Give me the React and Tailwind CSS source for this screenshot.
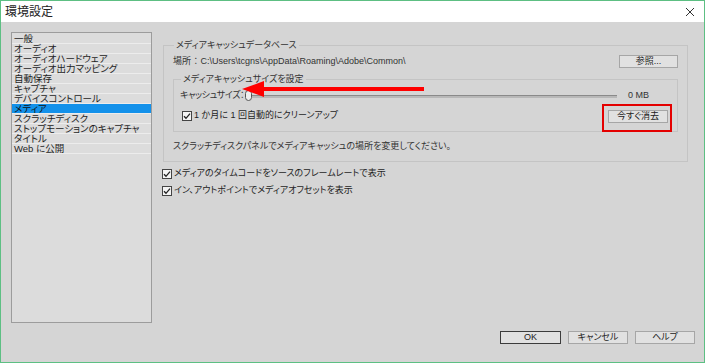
import React from 'react'

const jp = "font-['Liberation_Sans','Noto_Sans_CJK_JP',sans-serif] [font-feature-settings:'palt']"

const items = [
  '一般',
  'オーディオ',
  'オーディオハードウェア',
  'オーディオ出力マッピング',
  '自動保存',
  'キャプチャ',
  'デバイスコントロール',
  'メディア',
  'スクラッチディスク',
  'ストップモーションのキャプチャ',
  'タイトル',
  'Web に公開',
]

const Check = () => (
  <svg width="10" height="10" viewBox="0 0 10 10" className="shrink-0">
    <rect x="0.5" y="0.5" width="9" height="9" fill="#f4f4f4" stroke="#444" />
    <path d="M2 5.2 L4 7.3 L8 2.6" fill="none" stroke="#222" strokeWidth="1.3" />
  </svg>
)

const Btn = ({ children, def, w = 'w-[60px]' }) => (
  <button
    className={`${w} h-[13px] flex items-center justify-center bg-[#e1e1e1] text-[9px] leading-none text-[#222] border ${
      def ? 'border-[#3c3c3c]' : 'border-[#a6a6a6]'
    }`}
  >
    {children}
  </button>
)

const App = () => {
  return (
    <div className={`w-[705px] h-[363px] border border-[#5dbf83] flex flex-col bg-[#d5d5d5] text-[#1e1e1e] ${jp}`}>
      <div className="h-[21px] bg-white flex items-center justify-between pl-[4px] pr-[9px] shrink-0">
        <span className="text-[12px] text-[#222]">環境設定</span>
        <svg width="10" height="10" viewBox="0 0 10 10">
          <path d="M1 1 L9 9 M9 1 L1 9" stroke="#333" strokeWidth="1" />
        </svg>
      </div>

      <div className="flex-1 flex flex-col pt-[10px] pl-[10px] pr-[9px] relative">
        <div className="flex h-[291px]">
          <div className="w-[141px] h-full bg-[#dcdcdc] border border-[#9c9c9c] pt-[1px]">
            {items.map((t, i) => (
              <div
                key={t}
                className={`h-[10px] px-[2px] text-[9.5px] leading-[10px] border-b border-[#ececec] whitespace-nowrap ${
                  i === 7 ? 'bg-[#1391ea] text-[#111]' : ''
                }`}
              >
                {t}
              </div>
            ))}
          </div>

          <div className="ml-[11px] w-[525px] pt-[7px] text-[9px]">
            <fieldset className="border border-[#c4c4c4] px-[9px] pb-[8px]">
              <legend className="ml-[1px] px-[2px] leading-[12px] text-[#333]">メディアキャッシュデータベース</legend>
              <div className="mt-[4px] h-[13px] flex items-center justify-between">
                <span className="text-[#333] whitespace-nowrap">場所 ： C:\Users\tcgns\AppData\Roaming\Adobe\Common\</span>
                <Btn w="w-[59px]">参照...</Btn>
              </div>

              <fieldset className="mt-[5px] border border-[#c4c4c4] pl-[6px] pr-[9px] pb-[9px]">
                <legend className="ml-[1px] px-[2px] leading-[12px] text-[#333]">メディアキャッシュサイズを設定</legend>
                <div className="mt-[5px] h-[12px] flex items-center">
                  <span className="w-[66px] shrink-0 whitespace-nowrap tracking-[-0.4px] text-[#333]">キャッシュサイズ：</span>
                  <div className="relative w-[371px] h-[3px] bg-[#b8b8b8] border-t border-[#8a8a8a]">
                    <div className="absolute -left-[1px] -top-[6px] w-[7px] h-[11px] rounded-full border border-[#555] bg-[#eee]" />
                  </div>
                  <span className="ml-[11px] whitespace-nowrap text-[#333]">0 MB</span>
                </div>
                <div className="mt-[8px] h-[12px] flex items-center justify-between">
                  <div className="flex items-center gap-[2px] ml-[2px]">
                    <Check />
                    <span className="whitespace-nowrap">1 か月に 1 回自動的にクリーンアップ</span>
                  </div>
                  <div className="relative">
                    <Btn>今すぐ消去</Btn>
                    <div className="absolute -left-[6px] -top-[6px] w-[70px] h-[28px] border-2 border-[#e40000]" />
                  </div>
                </div>
              </fieldset>

              <div className="mt-[9px] h-[12px] flex items-center text-[#333]">
                スクラッチディスクパネルでメディアキャッシュの場所を変更してください。
              </div>
            </fieldset>

            <div className="mt-[6px] h-[12px] flex items-center gap-[2px] -ml-[1px]">
              <Check />
              <span>メディアのタイムコードをソースのフレームレートで表示</span>
            </div>
            <div className="mt-[5px] h-[12px] flex items-center gap-[2px] -ml-[1px]">
              <Check />
              <span>イン、アウトポイントでメディアオフセットを表示</span>
            </div>
          </div>
        </div>

        <div className="mt-[8px] flex justify-end gap-[7px]">
          <Btn def w="w-[61px]">OK</Btn>
          <Btn>キャンセル</Btn>
          <Btn>ヘルプ</Btn>
        </div>

        <svg className="absolute left-[241px] top-[59px]" width="184" height="16" viewBox="0 0 184 16">
          <path d="M18 6 H182 V10 H18 Z" fill="#f00" />
          <path d="M0 8 L22 0 L22 16 Z" fill="#f00" />
        </svg>
      </div>
    </div>
  )
}

export default App
